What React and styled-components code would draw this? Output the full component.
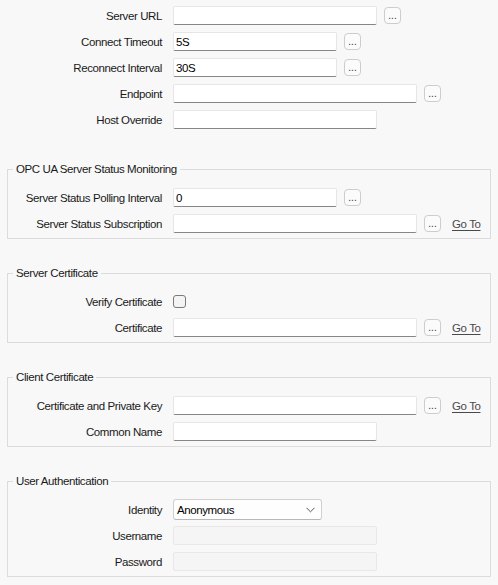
import React from "react";
import styled, { createGlobalStyle } from "styled-components";

const GlobalStyle = createGlobalStyle`
  html, body {
    margin: 0;
    padding: 0;
    background: #f8f8f8;
  }
  body {
    font-family: "Liberation Sans", Arial, sans-serif;
    font-size: 11.5px;
    letter-spacing: -0.4px;
    color: #1a1a1a;
  }
`;

const WIDTHS = { short: 164, wide: 204, long: 244 };

function Field({ label, value = "", width = "wide", browse, goTo, disabled, inGroup }) {
  return (
    <Row>
      <Label $w={inGroup ? 154 : 155}>{label}</Label>
      <TextBox $w={WIDTHS[width]} $disabled={disabled}>
        {value}
      </TextBox>
      {browse && <BrowseButton>...</BrowseButton>}
      {goTo && <GoTo>Go To</GoTo>}
    </Row>
  );
}

export default function App() {
  return (
    <>
      <GlobalStyle />
      <Page>
        <Rows>
          <Field label="Server URL" width="wide" browse />
          <Field label="Connect Timeout" value="5S" width="short" browse />
          <Field label="Reconnect Interval" value="30S" width="short" browse />
          <Field label="Endpoint" width="long" browse />
          <Field label="Host Override" width="wide" />
        </Rows>

        <Group $top={33}>
          <Legend>OPC UA Server Status Monitoring</Legend>
          <Rows>
            <Field inGroup label="Server Status Polling Interval" value="0" width="short" browse />
            <Field inGroup label="Server Status Subscription" width="long" browse goTo />
          </Rows>
        </Group>

        <Group>
          <Legend>Server Certificate</Legend>
          <Rows>
            <Row>
              <Label $w={154}>Verify Certificate</Label>
              <CheckBox />
            </Row>
            <Field inGroup label="Certificate" width="long" browse goTo />
          </Rows>
        </Group>

        <Group>
          <Legend>Client Certificate</Legend>
          <Rows>
            <Field inGroup label="Certificate and Private Key" width="long" browse goTo />
            <Field inGroup label="Common Name" width="wide" />
          </Rows>
        </Group>

        <Group>
          <Legend>User Authentication</Legend>
          <Rows>
            <Row $tall>
              <Label $w={154}>Identity</Label>
              <Select>
                <span>Anonymous</span>
                <svg width="9" height="6" viewBox="0 0 9 6">
                  <path d="M0.5 0.8 L4.5 4.8 L8.5 0.8" fill="none" stroke="#555" strokeWidth="1" />
                </svg>
              </Select>
            </Row>
            <Field inGroup label="Username" width="wide" disabled />
            <Field inGroup label="Password" width="wide" disabled />
          </Rows>
        </Group>
      </Page>
    </>
  );
}

const Page = styled.div`
  width: 498px;
  height: 585px;
  box-sizing: border-box;
  padding: 6px 7px 0;
  overflow: hidden;
`;

const Rows = styled.div`
  display: flex;
  flex-direction: column;
  gap: 7px;
`;

const Row = styled.div`
  display: flex;
  align-items: center;
  height: ${(p) => (p.$tall ? "21px" : "19px")};
  margin: ${(p) => (p.$tall ? "-1px 0" : "0")};
`;

const Label = styled.div`
  width: ${(p) => p.$w}px;
  flex-shrink: 0;
  text-align: right;
  margin-right: 11px;
  white-space: nowrap;
  color: #1a1a1a;
`;

const TextBox = styled.div`
  width: ${(p) => p.$w}px;
  height: 19px;
  box-sizing: border-box;
  flex-shrink: 0;
  display: flex;
  align-items: center;
  padding: 0 2px;
  background: ${(p) => (p.$disabled ? "#f5f5f5" : "#ffffff")};
  border: 1px solid ${(p) => (p.$disabled ? "#e8e8e8" : "#e6e6e6")};
  border-bottom-color: ${(p) => (p.$disabled ? "#e8e8e8" : "#868686")};
  border-radius: 2px;
  color: #000;
`;

const BrowseButton = styled.div`
  width: 17px;
  height: 17px;
  box-sizing: border-box;
  margin-left: 7px;
  border: 1px solid #cdcdcd;
  border-radius: 4px;
  background: #fbfbfb;
  display: flex;
  align-items: flex-end;
  justify-content: center;
  padding-bottom: 3px;
  font-size: 10px;
  letter-spacing: 0;
  line-height: 8px;
  color: #3a2a4a;
`;

const GoTo = styled.span`
  margin-left: 11px;
  color: #4a4a4a;
  text-decoration: underline;
  text-underline-offset: 2px;
`;

const CheckBox = styled.div`
  width: 13px;
  height: 13px;
  box-sizing: border-box;
  border: 1px solid #7a7a7a;
  border-radius: 3px;
  background: #f4f4f4;
`;

const Select = styled.div`
  width: 149px;
  height: 21px;
  box-sizing: border-box;
  display: flex;
  align-items: center;
  justify-content: space-between;
  padding: 0 6px 0 3px;
  background: #fefefe;
  border: 1px solid #d0d0d0;
  border-bottom-color: #b8b8b8;
  border-radius: 3px;
  color: #000;
`;

const Group = styled.fieldset`
  margin: ${(p) => p.$top ?? 27}px 0 0;
  padding: 12px 0 5px;
  border: 1px solid #dcdcdc;
  min-width: 0;
`;

const Legend = styled.legend`
  margin-left: 5px;
  padding: 0 3px;
  line-height: 14px;
  color: #1a1a1a;
`;
